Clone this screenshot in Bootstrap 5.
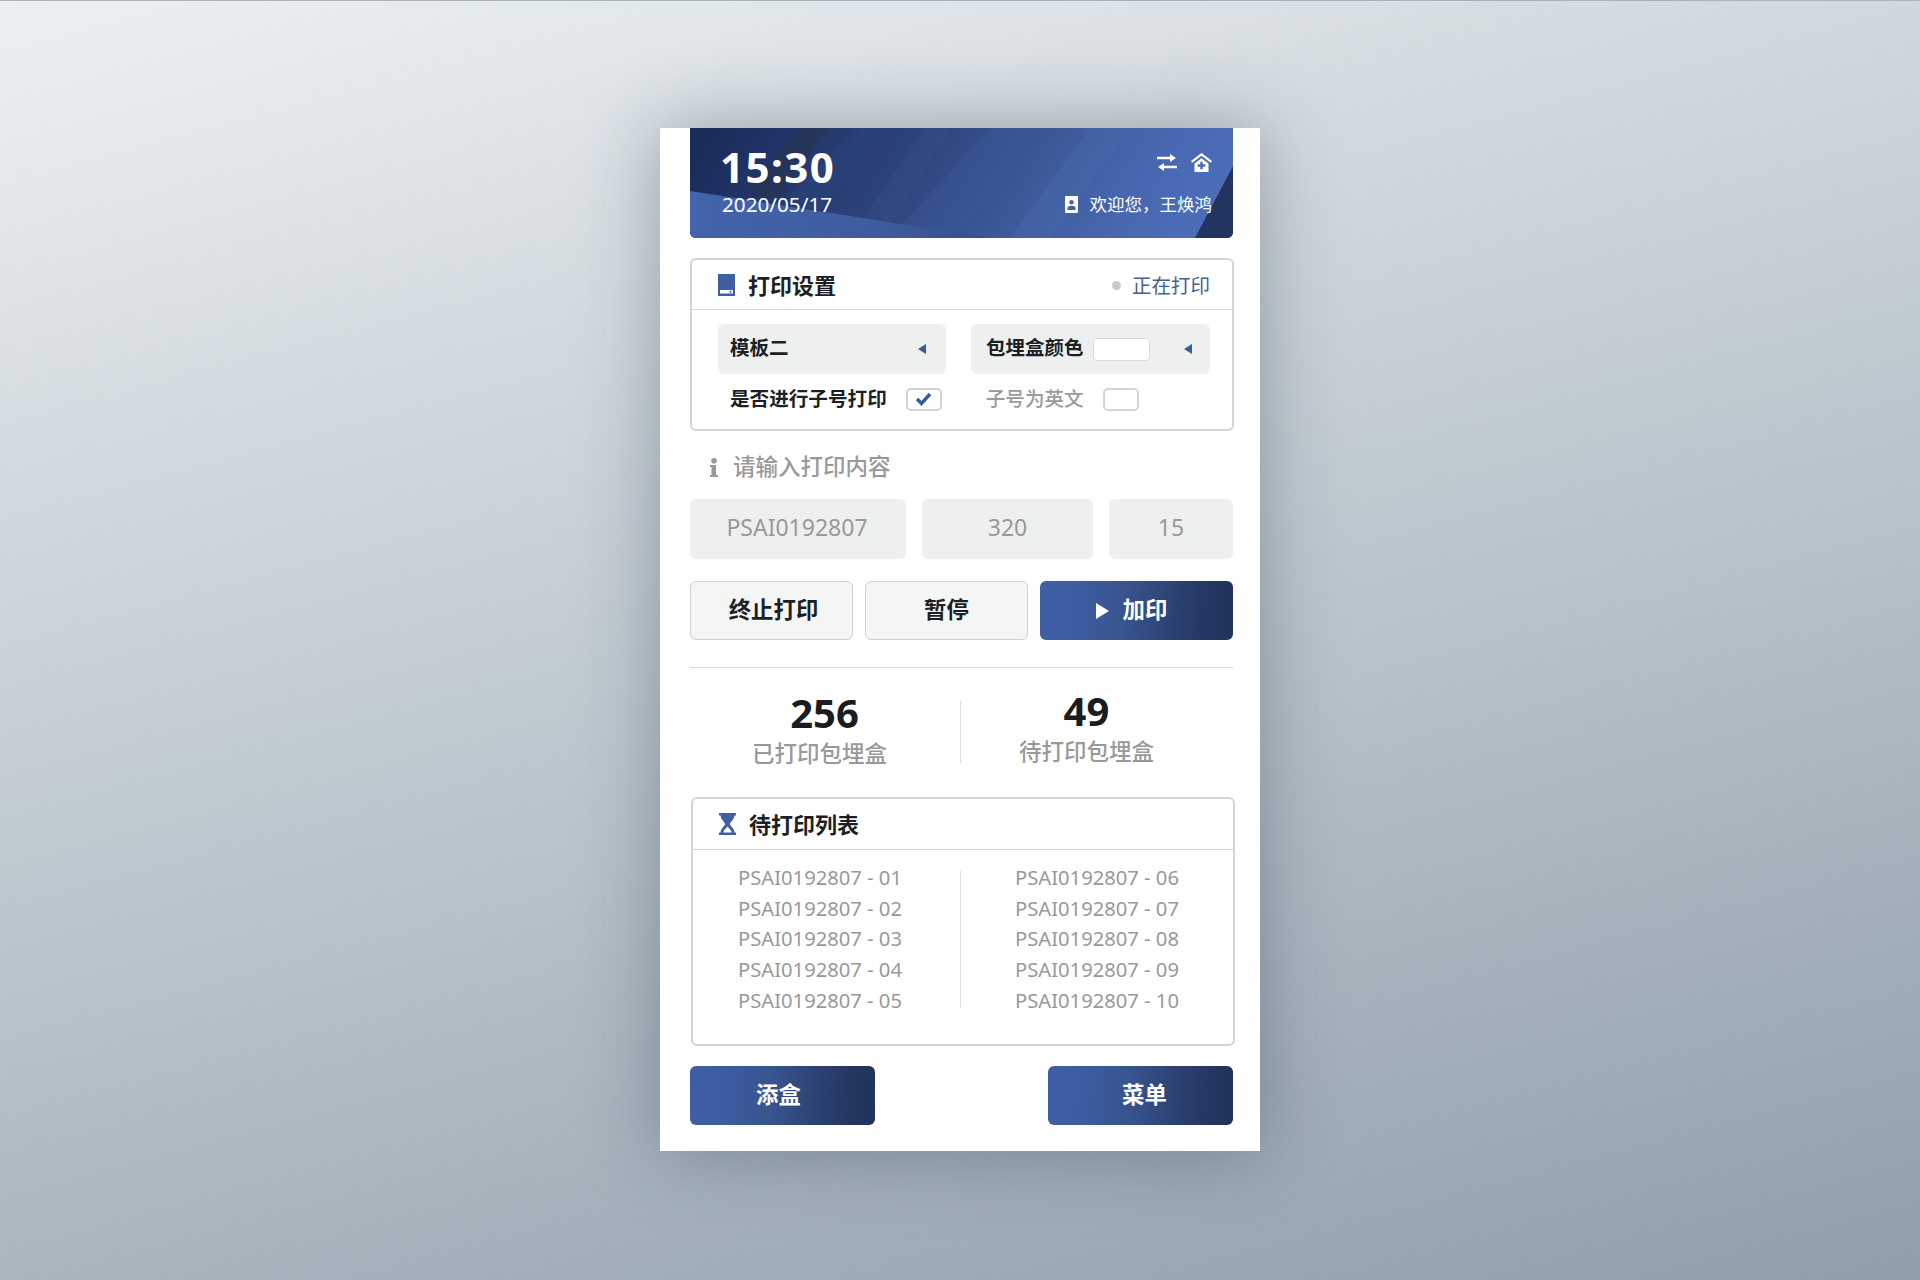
<!doctype html>
<html lang="zh"><head><meta charset="utf-8"><title>打印设置</title>
<link href="https://cdn.jsdelivr.net/npm/bootstrap@5.3.0/dist/css/bootstrap.min.css" rel="stylesheet">
<style>
html,body{height:100%}
body{margin:0;height:1280px;overflow:hidden;font-family:"Noto Sans","Noto Sans CJK SC",sans-serif;background:linear-gradient(165deg,#ecf0f2 0%,#8e9eab 100%);border-top:1px solid #aab2ba}
.stage{padding-top:127px}
.phone{width:600px;height:1023px;margin:0 auto;padding:0 27px 0 30px;background:#fff;box-shadow:0 0 70px rgba(40,55,70,.38)}
.hdr{position:relative;height:110px;border-radius:0 0 6px 6px;overflow:hidden;color:#fff;background:#2a4070}
.hdr-bg{position:absolute;inset:0;width:100%;height:100%}
.hdr-in{position:relative;height:100%;padding:0 21px 0 30px}
.clock{font-size:42px;font-weight:700;line-height:1;padding-top:18px;letter-spacing:1.5px}
.cdate{font-size:20.7px;line-height:1;padding:6px 0 0 2px}
.hi{font-size:17.5px;line-height:1}
.pane{border:2px solid #d2d4d6;border-radius:6px}
.pane-h{height:50px;border-bottom:1px solid #d2d4d6;padding:0 22px 0 26px}
.pane-t{font-size:22px;font-weight:700;color:#1c1f24;margin-left:13px;line-height:1}
.stat-run{font-size:19.5px;color:#44618f;line-height:1;padding-top:2px}
.dot9{width:9px;height:9px;border-radius:50%;background:#c3ccd5;margin-right:11px}
.sel{height:50px;background:#eef0f0;border-radius:6px;font-size:19.5px;font-weight:700;color:#1c1f24;line-height:1}
.sel>span{margin-top:-2px}
.sel>.tri{margin-top:-1px}
.sel1{width:228px;padding:0 20px 0 12px}
.sel2{width:239px;margin-left:25px;padding:0 18px 0 15px}
.tri{width:0;height:0;border-style:solid;border-width:5px 8px 5px 0;border-color:transparent #3c5a99 transparent transparent}
.swatch{width:57px;height:23px;background:#fff;border:1px solid #d9dcdd;border-radius:4px;margin-left:9px}
.ck-row{padding:0 0 0 38px;height:50px;font-size:19.6px;font-weight:700;color:#1c1f24;line-height:1}
.ck{width:36px;height:23px;border:2px solid #d2d5d7;border-radius:5px;background:#fff}
.muted-t{color:#9a9a9a;font-weight:500}
.hint{height:68px;padding:4px 0 0 20px;color:#999;font-size:22.5px;font-weight:500;line-height:1}
.fld{height:60px;background:#eef0f0;border-radius:6px;color:#999;font-size:23px;line-height:1;padding-bottom:3px}
.act{height:59px;border-radius:6px;font-size:22.4px;font-weight:700;line-height:1;padding:0}
.act-l{background:#f4f5f5;border:1px solid #cfd1d2;color:#1c1f24}
.act-l:hover{background:#f4f5f5;color:#1c1f24}
.act-b{color:#fff;border:0;background:linear-gradient(94deg,#3f5fa5 0%,#3d5ba0 22%,#3c599b 28%,#39558f 42%,#354f88 50%,#304779 62%,#2b3f6f 72%,#253863 84%,#20325b 100%)}
.act-b:hover{color:#fff;background:linear-gradient(94deg,#3f5fa5 0%,#3d5ba0 22%,#3c599b 28%,#39558f 42%,#354f88 50%,#304779 62%,#2b3f6f 72%,#253863 84%,#20325b 100%)}
.rule{height:1px;background:#d8dadb;margin:27px 0 0}
.num{font-size:40px;font-weight:700;color:#1a1c20;line-height:1}
.cap{font-size:22.5px;font-weight:500;color:#999;line-height:1;margin-top:10px}
.vbar{width:1px;background:#dcdedf}
.li{font-size:20.2px;color:#999;line-height:30.7px;white-space:nowrap}
</style></head>
<body>
<div class="stage"><div class="phone">
 <div class="hdr">
  <svg class="hdr-bg" viewBox="0 0 543 110" preserveAspectRatio="none" aria-hidden="true">
   <defs><linearGradient id="g1" x1="0" y1="0" x2="1" y2="0.12"><stop offset="0" stop-color="#1a2a55"/><stop offset=".2" stop-color="#22356a"/><stop offset=".45" stop-color="#2e467d"/><stop offset=".7" stop-color="#3e5b9c"/><stop offset=".88" stop-color="#4867b0"/><stop offset="1" stop-color="#4b6cb7"/></linearGradient>
   <linearGradient id="g2" x1="0" y1="0" x2="1" y2="0"><stop offset="0" stop-color="#4364ac"/><stop offset=".6" stop-color="#3f5c9e"/><stop offset="1" stop-color="#344f8c"/></linearGradient></defs>
   <rect width="543" height="110" fill="url(#g1)"/>
   <polygon points="110,0 137,0 90,70 55,66" fill="#2b3344" opacity=".45"/>
   <polygon points="170,0 200,0 130,82 90,75" fill="#2f4a84" opacity=".3"/>
   <polygon points="235,0 262,0 190,110 160,110" fill="#3a5590" opacity=".25"/>
   <polygon points="300,0 350,0 265,110 200,110" fill="#3b5a9a" opacity=".35"/>
   <polygon points="400,0 440,0 360,110 320,110" fill="#4a6ab0" opacity=".35"/>
   <polygon points="0,63 300,110 0,110" fill="url(#g2)"/>
   <polygon points="543,38 543,110 505,110" fill="#22345f"/>
  </svg>
  <div class="hdr-in d-flex justify-content-between">
   <div><div class="clock">15:30</div><div class="cdate">2020/05/17</div></div>
   <div class="d-flex flex-column align-items-end">
    <div class="d-flex align-items-center" style="padding-top:25px;gap:14px">
     <svg width="20" height="17" viewBox="0 0 20 17" fill="#fff"><path d="M0 2.800h13V0l6 4-6 4V5.200H0zM20 11.800H7V9l-6 4 6 4v-2.800h13z"/></svg>
     <svg width="21" height="19" viewBox="0 0 21 19" fill="#fff"><path d="M10.500 0 21 8l-1.300 1.800-9.200-7-9.200 7L0 8zM3.500 10.500l7-5.300 7 5.300V19h-14zM9.300 8.700v2.600H6.700v2.400h2.600v2.600h2.400v-2.600h2.600v-2.400h-2.600V8.700z" fill-rule="evenodd"/></svg>
    </div>
    <div class="hi d-flex align-items-center" style="margin-top:24px">
     <svg width="13" height="17" viewBox="0 0 13 17" style="margin-right:12px"><path fill="#fff" fill-rule="evenodd" d="M1 0h11a1 1 0 0 1 1 1v15a1 1 0 0 1-1 1H1a1 1 0 0 1-1-1V1a1 1 0 0 1 1-1zM6.500 4a2.300 2.300 0 1 0 0 4.600 2.300 2.300 0 0 0 0-4.600zM2.500 14h8v-2.200c0-1.200-1.400-2-4-2s-4 .8-4 2z"/></svg>
     <span>欢迎您，王焕鸿</span>
    </div>
   </div>
  </div>
 </div>

 <div class="pane" style="margin-top:20px;height:173px;width:544px">
  <div class="pane-h d-flex align-items-center">
   <svg width="17" height="22" viewBox="0 0 17 22"><path fill="#3f5ea4" d="M0 0h17v22H0z"/><path fill="#fff" d="M2 16h13v3.500H2z"/><circle cx="12.500" cy="17.700" r="1" fill="#3f5ea4"/></svg>
   <span class="pane-t">打印设置</span>
   <span class="ms-auto d-flex align-items-center stat-run"><i class="dot9"></i>正在打印</span>
  </div>
  <div style="padding:14px 0 0 26px">
   <div class="d-flex">
    <div class="sel sel1 d-flex align-items-center justify-content-between"><span>模板二</span><i class="tri"></i></div>
    <div class="sel sel2 d-flex align-items-center"><span>包埋盒颜色</span><i class="swatch"></i><i class="tri ms-auto"></i></div>
   </div>
  </div>
  <div class="ck-row d-flex align-items-center">
   <span>是否进行子号打印</span>
   <span class="ck d-flex align-items-center justify-content-center" style="margin-left:19px"><svg width="17" height="14" viewBox="0 0 17 14"><path d="M2 7l4.500 4.500L15 2" fill="none" stroke="#3c5a99" stroke-width="3.400"/></svg></span>
   <span class="muted-t" style="margin-left:44px">子号为英文</span>
   <span class="ck" style="margin-left:19px"></span>
  </div>
 </div>

 <div class="hint d-flex align-items-center">
  <svg width="8" height="19" viewBox="0 0 8 19" style="margin-right:15px"><circle cx="4" cy="2.800" r="2.800" fill="#999"/><path fill="#999" d="M0 7h6v10h2v2H0v-2h1.500V9H0z"/></svg>请输入打印内容
 </div>
 <div class="d-flex" style="gap:16px;width:543px">
  <div class="fld d-flex align-items-center justify-content-center" style="width:216px;padding-right:2px">PSAI0192807</div>
  <div class="fld d-flex align-items-center justify-content-center" style="width:171px">320</div>
  <div class="fld d-flex align-items-center justify-content-center" style="width:124px">15</div>
 </div>
 <div class="d-flex" style="gap:12px;width:543px;margin-top:22px">
  <button class="btn act act-l" style="width:163px;padding-left:4px">终止打印</button>
  <button class="btn act act-l" style="width:163px">暂停</button>
  <button class="btn act act-b d-flex align-items-center justify-content-center" style="width:193px;padding-right:10px"><svg width="13" height="16" viewBox="0 0 13 16" style="margin-right:14px"><path fill="#fff" d="M0 0l13 8-13 8z"/></svg>加印</button>
 </div>
 <div class="rule" style="width:543px"></div>

 <div class="d-flex" style="height:129px;width:543px;padding-top:33px">
  <div class="text-center" style="width:270px;padding-right:11px"><div class="num" style="padding-left:10px;margin-top:-8px">256</div><div class="cap">已打印包埋盒</div></div>
  <div class="vbar" style="height:62px"></div>
  <div class="text-center" style="width:250px;padding-left:1px"><div class="num" style="margin-top:-10px">49</div><div class="cap">待打印包埋盒</div></div>
 </div>

 <div class="pane" style="width:544px;height:249px;margin-left:1px">
  <div class="pane-h d-flex align-items-center" style="height:51px">
   <svg width="17" height="22" viewBox="0 0 17 22"><path fill="#3f5ea4" fill-rule="evenodd" d="M0 0h17v2.500h-1.600c0 3.600-3.200 5.600-4.700 8.500 1.500 2.900 4.700 4.900 4.700 8.500H17V22H0v-2.500h1.600c0-3.600 3.200-5.600 4.700-8.500C4.800 8.100 1.600 6.100 1.600 2.500H0zM8.500 13.500c-1.200 1.800-3.800 3.600-4.300 6h8.600c-.5-2.400-3.100-4.200-4.300-6z"/></svg>
   <span class="pane-t">待打印列表</span>
  </div>
  <div class="d-flex" style="padding-top:21px">
   <div class="li" style="width:267px;padding-left:45px;margin-top:-9px">PSAI0192807 - 01<br>PSAI0192807 - 02<br>PSAI0192807 - 03<br>PSAI0192807 - 04<br>PSAI0192807 - 05</div>
   <div class="vbar" style="height:137px"></div>
   <div class="li" style="padding-left:54px;margin-top:-9px">PSAI0192807 - 06<br>PSAI0192807 - 07<br>PSAI0192807 - 08<br>PSAI0192807 - 09<br>PSAI0192807 - 10</div>
  </div>
 </div>

 <div class="d-flex justify-content-between" style="width:543px;margin-top:20px">
  <button class="btn act act-b" style="width:185px;padding-right:8px">添盒</button>
  <button class="btn act act-b" style="width:185px;padding-left:8px">菜单</button>
 </div>
</div></div>
<script src="https://cdn.jsdelivr.net/npm/bootstrap@5.3.0/dist/js/bootstrap.bundle.min.js"></script>
</body></html>
